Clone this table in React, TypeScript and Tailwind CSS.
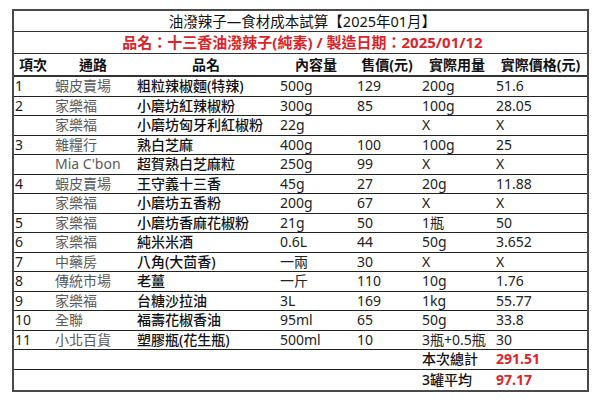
import React from "react";

const rows: string[][] = [
  ["1", "蝦皮賣場", "粗粒辣椒麵(特辣)", "500g", "129", "200g", "51.6"],
  ["2", "家樂福", "小磨坊紅辣椒粉", "300g", "85", "100g", "28.05"],
  ["", "家樂福", "小磨坊匈牙利紅椒粉", "22g", "", "X", "X"],
  ["3", "雜糧行", "熟白芝麻", "400g", "100", "100g", "25"],
  ["", "Mia C'bon", "超賀熟白芝麻粒", "250g", "99", "X", "X"],
  ["4", "蝦皮賣場", "王守義十三香", "45g", "27", "20g", "11.88"],
  ["", "家樂福", "小磨坊五香粉", "200g", "67", "X", "X"],
  ["5", "家樂福", "小磨坊香麻花椒粉", "21g", "50", "1瓶", "50"],
  ["6", "家樂福", "純米米酒", "0.6L", "44", "50g", "3.652"],
  ["7", "中藥房", "八角(大茴香)", "一兩", "30", "X", "X"],
  ["8", "傳統市場", "老薑", "一斤", "110", "10g", "1.76"],
  ["9", "家樂福", "台糖沙拉油", "3L", "169", "1kg", "55.77"],
  ["10", "全聯", "福壽花椒香油", "95ml", "65", "50g", "33.8"],
  ["11", "小北百貨", "塑膠瓶(花生瓶)", "500ml", "10", "3瓶+0.5瓶", "30"],
];

const grid = "grid grid-cols-[38px_82px_144px_76px_66px_74px_93px]";

export default function App() {
  return (
    <div className="w-[600px] h-[401px] bg-white font-['Noto_Sans','Noto_Sans_CJK_TC',sans-serif] text-[14px] leading-none">
      <div className="pt-[9px] pl-[12px]">
        <div className="w-[577px] border-2 border-[#4a4a4a]">
          <div className="h-[21px] border-b border-[#333] flex items-center justify-center text-[#111] text-[14.5px] pl-[4px]">
            油潑辣子—食材成本試算【2025年01月】
          </div>
          <div className="h-[22px] border-b border-[#333] flex items-center justify-center text-[#dc252b] font-bold text-[15px] pl-[4px]">
            品名：十三香油潑辣子(純素) / 製造日期：2025/01/12
          </div>
          <div className={`${grid} h-[23px] border-b-2 border-[#333] items-center font-bold text-[#111]`}>
            {["項次", "通路", "品名", "內容量", "售價(元)", "實際用量", "實際價格(元)"].map((h) => (
              <div key={h} className="text-center whitespace-nowrap">
                {h}
              </div>
            ))}
          </div>
          {rows.map((r, i) => (
            <div key={i} className={`${grid} h-[19.5px] border-b border-[#222] items-center whitespace-nowrap`}>
              <div className="pl-[1px] text-[#222]">{r[0]}</div>
              <div className="pl-[3px] text-[#5a5a5a]">{r[1]}</div>
              <div className="pl-[3px] text-[#111] font-medium">{r[2]}</div>
              <div className="pl-[2px] text-[#222]">{r[3]}</div>
              <div className="pl-[3px] text-[#222]">{r[4]}</div>
              <div className="pl-[2px] text-[#222]">{r[5]}</div>
              <div className="pl-[2px] text-[#222]">{r[6]}</div>
            </div>
          ))}
          <div className={`${grid} h-[19.5px] border-b border-[#222] items-center whitespace-nowrap`}>
            <div />
            <div />
            <div />
            <div />
            <div />
            <div className="pl-[2px] text-[#111] font-medium">本次總計</div>
            <div className="pl-[2px] text-[#dc252b] font-bold">291.51</div>
          </div>
          <div className={`${grid} h-[20px] items-center whitespace-nowrap`}>
            <div />
            <div />
            <div />
            <div />
            <div />
            <div className="pl-[2px] text-[#111] font-medium">3罐平均</div>
            <div className="pl-[2px] text-[#dc252b] font-bold">97.17</div>
          </div>
        </div>
      </div>
    </div>
  );
}
